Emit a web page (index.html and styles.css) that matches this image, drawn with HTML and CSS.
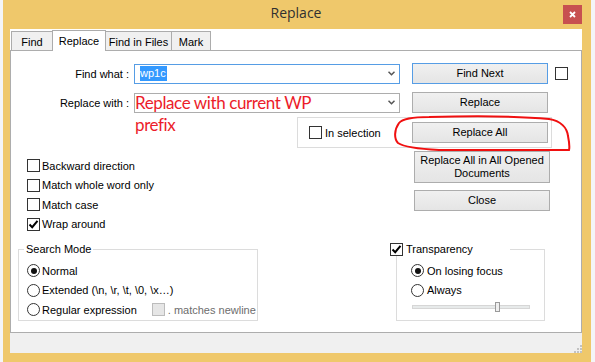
FILE: index.html
```html
<!DOCTYPE html>
<html lang="en">
<head>
  <meta charset="UTF-8">
  <title>Replace</title>
  <link rel="stylesheet" href="styles.css">
</head>
<body>
  <div class="window">
    <div class="titlebar">
      <div class="title">Replace</div>
      <div class="close">
        <svg width="7" height="7" viewBox="0 0 7 7"><path d="M1 1 L6 6 M6 1 L1 6" stroke="#fff" stroke-width="1.8"/></svg>
      </div>
    </div>

    <div class="client">
      <div class="tabs">
        <div class="tab tab-find">Find</div>
        <div class="tab tab-replace active">Replace</div>
        <div class="tab tab-files">Find in Files</div>
        <div class="tab tab-mark">Mark</div>
      </div>

      <div class="panel">
        <div class="field-row">
          <div class="label">Find what :</div>
          <div class="combo focused">
            <span class="selected">wp1c</span>
            <svg class="chevron" width="7" height="5" viewBox="0 0 7 5"><path d="M0.5 0.8 L3.5 3.8 L6.5 0.8" fill="none" stroke="#555" stroke-width="1.5"/></svg>
          </div>
          <div class="btn default">Find Next</div>
          <span class="box"></span>
        </div>

        <div class="field-row second">
          <div class="label">Replace with :</div>
          <div class="combo">
            <svg class="chevron" width="7" height="5" viewBox="0 0 7 5"><path d="M0.5 0.8 L3.5 3.8 L6.5 0.8" fill="none" stroke="#555" stroke-width="1.5"/></svg>
          </div>
          <div class="btn">Replace</div>
        </div>

        <div class="selection-box">
          <label class="check"><span class="box"></span>In selection</label>
          <div class="btn">Replace All</div>
        </div>

        <div class="middle">
          <div class="options">
            <label class="check opt"><span class="box"></span>Backward direction</label>
            <label class="check opt"><span class="box"></span>Match whole word only</label>
            <label class="check opt"><span class="box"></span>Match case</label>
            <label class="check opt"><span class="box checked"><svg width="11" height="11" viewBox="0 0 11 11"><path d="M1.5 5.5 L4.2 8.2 L9.5 1.8" fill="none" stroke="#000" stroke-width="2"/></svg></span>Wrap around</label>
          </div>
          <div class="side-buttons">
            <div class="btn tall">Replace All in All Opened<br>Documents</div>
            <div class="btn">Close</div>
          </div>
        </div>

        <div class="groups">
          <fieldset class="group search-mode">
            <legend>Search Mode</legend>
            <div class="radio-list">
              <label class="check opt"><span class="radio on"></span>Normal</label>
              <label class="check opt"><span class="radio"></span>Extended (\n, \r, \t, \0, \x…)</label>
              <div class="check opt">
                <label class="check opt"><span class="radio"></span>Regular expression</label>
                <span class="sub-check"><span class="box disabled"></span>. matches newline</span>
              </div>
            </div>
          </fieldset>

          <fieldset class="group transparency">
            <legend><span class="box checked"><svg width="11" height="11" viewBox="0 0 11 11"><path d="M1.5 5.5 L4.2 8.2 L9.5 1.8" fill="none" stroke="#000" stroke-width="2"/></svg></span>Transparency</legend>
            <div class="radio-list">
              <label class="check"><span class="radio on"></span>On losing focus</label>
              <label class="check"><span class="radio"></span>Always</label>
              <div class="slider-row">
                <div class="slider"><span class="thumb"></span></div>
              </div>
            </div>
          </fieldset>
        </div>

        <div class="note">Replace with current WP<br>prefix</div>
        <svg class="scribble" width="185" height="45" viewBox="392 111 185 45">
          <path d="M400 123 C404 118 415 117 430 117 C470 116 520 116 550 119 C562 121 568 128 569 136 C570 141 571 146 570 150 L440 150 C420 149 405 147 399 143 C395 139 395 130 400 123" fill="none" stroke="#f01010" stroke-width="2"/>
        </svg>
      </div>

      <div class="statusbar">
        <svg class="grip" width="9" height="9" viewBox="0 0 9 9" fill="#c2c2c2">
          <rect x="7" y="1" width="2" height="2"/>
          <rect x="4" y="4" width="2" height="2"/><rect x="7" y="4" width="2" height="2"/>
          <rect x="1" y="7" width="2" height="2"/><rect x="4" y="7" width="2" height="2"/><rect x="7" y="7" width="2" height="2"/>
        </svg>
      </div>
    </div>
  </div>
</body>
</html>
```

FILE: styles.css
```css
body {
  margin: 0;
  background: #f4f5f7;
  font: 11px "Liberation Sans", Arial, sans-serif;
  color: #000;
}
.window {
  width: 588px;
  height: 362px;
  margin-left: 3px;
  box-sizing: border-box;
  padding: 0 9px 9px 7px;
  background: #efc86b;
  display: flex;
  flex-direction: column;
}
.titlebar {
  height: 29px;
  flex-shrink: 0;
  display: grid;
  grid-template-columns: 1fr auto 1fr;
  align-items: start;
}
.title {
  grid-column: 2;
  padding-top: 3px;
  font: 14px/20px "Open Sans", sans-serif;
  color: #303030;
}
.close {
  grid-column: 3;
  justify-self: end;
  margin-top: 5px;
  width: 19px;
  height: 19px;
  background: #c75050;
  display: flex;
  align-items: center;
  justify-content: center;
}
.client {
  flex: 1;
  display: flex;
  flex-direction: column;
  background: #fff;
}
.tabs {
  height: 21px;
  flex-shrink: 0;
  display: flex;
  align-items: flex-end;
  padding-left: 1px;
}
.tab {
  height: 19px;
  box-sizing: border-box;
  border: 1px solid #acacac;
  border-bottom: 0;
  background: #f0f0f0;
  margin-left: -1px;
  padding-top: 1px;
  display: flex;
  align-items: center;
  justify-content: center;
}
.tab:first-child { margin-left: 0; }
.tab.active {
  height: 21px;
  margin-bottom: -1px;
  padding-top: 0;
  background: #fff;
  position: relative;
  z-index: 1;
}
.tab-find { width: 42px; }
.tab-replace { width: 54px; }
.tab-files { width: 67px; }
.tab-mark { width: 40px; }

.panel {
  height: 283px;
  flex-shrink: 0;
  box-sizing: border-box;
  border: 1px solid #adadad;
  background: #fff;
  position: relative;
}
.field-row {
  display: flex;
  align-items: center;
  height: 21px;
  margin-top: 12px;
}
.field-row.second { margin-top: 8px; }
.label {
  width: 119px;
  padding-right: 1px;
  box-sizing: border-box;
  text-align: right;
}
.combo {
  margin-left: 4px;
  width: 266px;
  height: 20px;
  box-sizing: border-box;
  border: 1px solid #adadad;
  padding: 0 4px 0 5px;
  display: flex;
  align-items: center;
}
.combo.focused { border-color: #569de5; }
.selected {
  background: #3399ff;
  color: #fff;
  line-height: 15px;
  padding: 0 1px 0 0;
}
.chevron { margin-left: auto; }
.btn {
  margin-left: 12px;
  width: 136px;
  height: 21px;
  box-sizing: border-box;
  border: 1px solid #adadad;
  background: linear-gradient(#f0f0f0, #e5e5e5);
  display: flex;
  align-items: center;
  justify-content: center;
  text-align: center;
  line-height: 13px;
}
.btn.default { border-color: #569de5; }
.btn.tall { height: 32px; margin-left: 0; }

.box {
  width: 13px;
  height: 13px;
  box-sizing: border-box;
  border: 1px solid #333;
  background: #fff;
  display: inline-flex;
  flex-shrink: 0;
}
.field-row > .box { margin-left: 7px; }
.box.disabled {
  border-color: #bcbcbc;
  background: #e6e6e6;
}
.radio {
  width: 13px;
  height: 13px;
  box-sizing: border-box;
  border: 1px solid #333;
  border-radius: 50%;
  background: #fff;
  display: inline-flex;
  align-items: center;
  justify-content: center;
  flex-shrink: 0;
}
.radio.on::after {
  content: "";
  width: 6px;
  height: 6px;
  border-radius: 50%;
  background: #111;
}
.check {
  display: flex;
  align-items: center;
  gap: 3px;
  white-space: nowrap;
}
.check.opt { gap: 2px; }

.selection-box {
  margin: 4px 0 0 286px;
  width: 255px;
  height: 31px;
  box-sizing: border-box;
  border: 1px solid #dcdcdc;
  padding-left: 11px;
  display: flex;
  align-items: center;
}
.selection-box .btn { margin: 0 3px 0 auto; }

.middle {
  display: flex;
  align-items: flex-start;
}
.options {
  margin: 8px 0 0 16px;
}
.options .check,
.radio-list > .check {
  height: 19.5px;
}
.side-buttons {
  margin: 3px 31px 0 auto;
  display: flex;
  flex-direction: column;
  gap: 7px;
}
.side-buttons .btn { margin-left: 0; }

.groups {
  display: flex;
  margin-top: 9px;
}
.group {
  margin: 0;
  padding: 0;
  height: 78px;
  box-sizing: border-box;
  border: 1px solid #dcdcdc;
  min-inline-size: 0;
}
.group legend {
  line-height: 13px;
  padding: 0 2px;
  margin-left: 5px;
}
.search-mode {
  margin-left: 7px;
  width: 240px;
}
.transparency {
  margin-left: 138px;
  width: 149px;
}
.transparency legend {
  margin-left: -7px;
  padding: 0;
  width: 120px;
  display: flex;
  align-items: center;
  gap: 3px;
}
.radio-list {
  margin: 5px 0 0 8px;
}
.transparency .radio-list { margin-left: 14px; }
.sub-check {
  margin-left: 13px;
  display: flex;
  align-items: center;
  gap: 3px;
  color: #6d6d6d;
}
.slider-row {
  height: 19.5px;
  padding-top: 5px;
  box-sizing: border-box;
}
.slider {
  margin-left: 1px;
  width: 118px;
  height: 4px;
  box-sizing: border-box;
  border: 1px solid #d6d6d6;
  background: #e7eaea;
  position: relative;
}
.thumb {
  position: absolute;
  left: 82px;
  top: -4px;
  width: 5px;
  height: 10px;
  box-sizing: border-box;
  border: 1px solid #9a9a9a;
  background: #efefef;
}

.note {
  position: absolute;
  left: 124px;
  top: 41px;
  font: 17px/22px Lato, sans-serif;
  letter-spacing: -0.4px;
  color: #ec1c2a;
}
.scribble {
  position: absolute;
  left: 380px;
  top: 60px;
  overflow: visible;
}
.statusbar {
  flex: 1;
  background: #f0f0f0;
  display: flex;
  justify-content: flex-end;
  align-items: flex-end;
}
```
